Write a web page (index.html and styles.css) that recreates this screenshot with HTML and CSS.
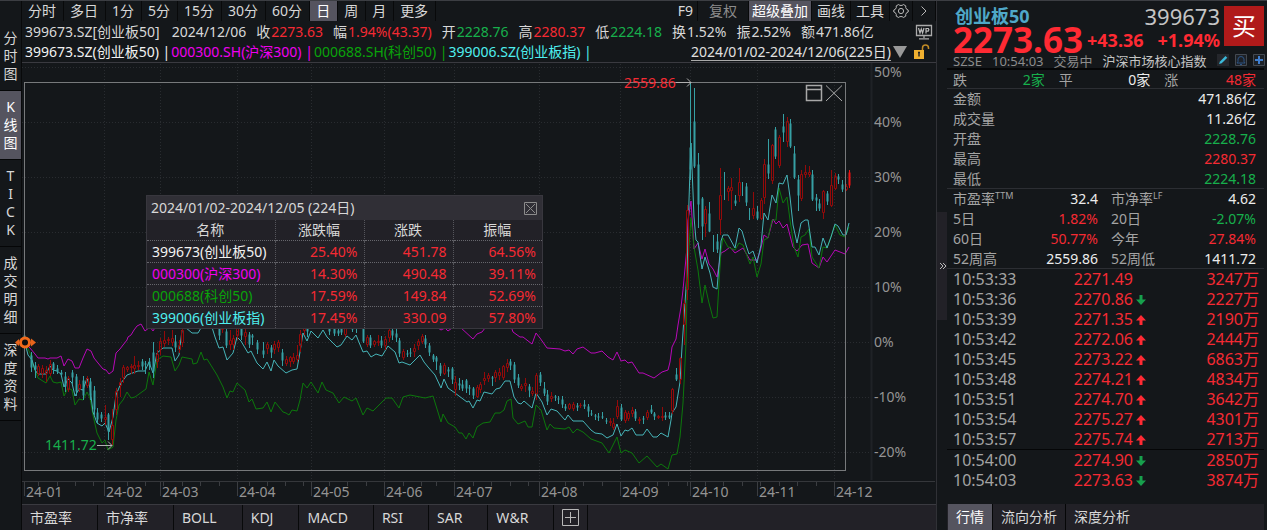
FILE: index.html
```html
<!DOCTYPE html>
<html lang="zh-CN">
<head>
<meta charset="utf-8">
<title>创业板50 399673</title>
<link rel="stylesheet" href="styles.css">
</head>
<body>
<div class="app">
  <nav class="side">
    <button class="side-tab">分<br>时<br>图</button>
    <button class="side-tab active">K<br>线<br>图</button>
    <button class="side-tab">T<br>I<br>C<br>K</button>
    <button class="side-tab">成<br>交<br>明<br>细</button>
    <button class="side-tab">深<br>度<br>资<br>料</button>
  </nav>

  <main class="main">
    <div class="toolbar">
      <div class="periods">
        <button>分时</button><button>多日</button><button>1分</button><button>5分</button><button>15分</button><button>30分</button><button>60分</button><button class="active">日</button><button>周</button><button>月</button><button>更多</button>
      </div>
      <div class="tools">
        <button class="tool-f9">F9</button><button class="tool-dim">复权</button><button class="tool-on active">超级叠加</button><button>画线</button><button>工具</button>
        <button class="tool-icon" aria-label="设置"><svg width="16" height="16" viewBox="0 0 16 16"><path d="M5.6 1.5 6.9 2.4H9.1L10.4 1.5 12.8 2.9 12.7 4.5 13.7 6.3 15.2 7V9L13.7 9.7 12.7 11.5 12.8 13.1 10.4 14.5 9.1 13.6H6.9L5.6 14.5 3.2 13.1 3.3 11.5 2.3 9.7.8 9V7L2.3 6.3 3.3 4.5 3.2 2.9Z"/><circle cx="8" cy="8" r="2.6"/></svg></button>
        <button class="tool-icon" aria-label="展开"><svg width="16" height="16" viewBox="0 0 16 16"><path d="M5.5 3.5 10 8 5.5 12.5"/></svg></button>
      </div>
    </div>

    <div class="quote">
      <span class="quote-name">399673.SZ[创业板50]</span>
      <span>2024/12/06</span>
      <span>收<b class="up">2273.63</b></span>
      <span>幅<b class="up">1.94%(43.37)</b></span>
      <span>开<b class="down">2228.76</b></span>
      <span>高<b class="up">2280.37</b></span>
      <span>低<b class="down">2224.18</b></span>
      <span>换<b>1.52%</b></span>
      <span>振<b>2.52%</b></span>
      <span>额<b>471.86亿</b></span>
      <svg class="quote-icon" width="18" height="16" viewBox="0 0 18 16"><path d="M1.5 1.5H16.5V11.5H1.5ZM9 11.5V14M4 14.8H14" fill="none" stroke="#aaa" stroke-width="1.3"/><path d="M3.5 4 5 9 6.3 5 7.6 9 9 4M11 9.5V4.5H13.3Q14.5 5.8 13.3 7.2H11" fill="none" stroke="#bbb" stroke-width="1.2"/></svg>
    </div>

    <div class="legend">
      <span class="s-white">399673.SZ(创业板50) |</span>
      <span class="s-magenta">000300.SH(沪深300) |</span>
      <span class="s-green">000688.SH(科创50) |</span>
      <span class="s-cyan">399006.SZ(创业板指) |</span>
      <a class="range" href="#">2024/01/02-2024/12/06(225日)</a>
      <svg class="range-arrow" width="16" height="14" viewBox="0 0 16 14"><path d="M1 1H15L8 13Z" fill="#999"/></svg>
      <svg class="lock" width="18" height="16" viewBox="0 0 18 16"><path d="M1 6H11V15H1Z" fill="#f0b030"/><path d="M5 8.5H7M6 8.5V12.5" stroke="#222" stroke-width="1.4"/><path d="M9.5 6V4Q9.500 1 12.500 1 15.500 1 15.500 4V5" fill="none" stroke="#c08a25" stroke-width="1.5"/></svg>
    </div>

    <section class="chart">
      <svg class="plot" viewBox="22 63 914 440">
        <g class="grid">
          <path d="M22 67.500H871M22 122.500H871M22 177.500H871M22 232.500H871M22 287.500H871M22 342.500H871M22 397.500H871M22 452.500H871"/>
          <path d="M104.500 64V480M160.500 64V480M237.500 64V480M311.500 64V480M384.500 64V480M454.500 64V480M539.500 64V480M620.500 64V480M690.500 64V480M757.500 64V480M834.500 64V480"/>
        </g>
        <path class="axis-rule" d="M871.500 63V480"/>
        <path class="axis-line" d="M22 481.500H935"/>
        <path class="axis-tick" d="M24.500 482V496M104.500 482V496M160.500 482V496M237.500 482V496M311.500 482V496M384.500 482V496M454.500 482V496M539.500 482V496M620.500 482V496M690.500 482V496M757.500 482V496M834.500 482V496M38.500 482V486M57.500 482V486M75.500 482V486M93.500 482V486M127.500 482V486M145.500 482V486M163.500 482V486M182.500 482V486M200.500 482V486M219.500 482V486M249.500 482V486M267.500 482V486M285.500 482V486M303.500 482V486M329.500 482V486M347.500 482V486M366.500 482V486M403.500 482V486M421.500 482V486M436.500 482V486M473.500 482V486M491.500 482V486M510.500 482V486M528.500 482V486M547.500 482V486M565.500 482V486M583.500 482V486M602.500 482V486M639.500 482V486M657.500 482V486M668.500 482V486M687.500 482V486M705.500 482V486M723.500 482V486M742.500 482V486M760.500 482V486M779.500 482V486M797.500 482V486M816.500 482V486"/>
        <g class="axis-text">
          <text x="874" y="77">50%</text><text x="874" y="127">40%</text><text x="874" y="182">30%</text><text x="874" y="237">20%</text><text x="874" y="292">10%</text><text x="874" y="347">0%</text><text x="874" y="402">-10%</text><text x="874" y="457">-20%</text>
          <text x="26" y="497">24-01</text><text x="106" y="497">24-02</text><text x="162" y="497">24-03</text><text x="239" y="497">24-04</text><text x="313" y="497">24-05</text><text x="386" y="497">24-06</text><text x="456" y="497">24-07</text><text x="541" y="497">24-08</text><text x="622" y="497">24-09</text><text x="692" y="497">24-10</text><text x="759" y="497">24-11</text><text x="836" y="497">24-12</text>
        </g>
        <g class="lines">
          <polyline class="l-magenta" points="25,343 30,348 35,354 38,358 45,358 48,359 50,358 57,358 61,356 64,366 68,359 72,361 75,368 79,368 83,358 87,349 91,351 94,358 98,363 103,369 106,370 109,374 113,371 116,353 120,349 123,345 127,340 128,337 131,335 134,330 137,326 141,324 145,331 150,327 153,331 156,326 170,310 300,300 420,310 438,328 441,330 445,328 448,331 452,328 460,327 473,339 477,334 482,332 485,328 498,318 511,326 513,332 520,337 523,337 532,344 536,333 540,338 547,348 560,349 565,351 569,350 573,354 577,349 583,347 591,353 595,353 602,351 608,357 613,360 617,352 621,361 625,360 628,363 632,362 639,373 643,373 654,378 658,375 662,372 668,370 670,362 672,347 676,339 678,325 681,307 683,290 687,247 688,220 691,201 694,249 698,243 702,259 705,249 709,264 713,269 717,277 721,253 725,251 730,247 735,253 743,248 750,260 757,260 760,252 764,235 768,238 773,219 776,224 779,221 783,228 787,224 793,247 797,251 802,245 808,244 812,263 819,268 823,257 827,262 835,250 845,254 849,247"/>
          <polyline class="l-green" points="25,343 30,353 33,365 38,378 46,383 50,376 53,382 57,383 61,382 64,396 68,388 72,390 75,405 79,399 83,400 87,392 90,398 93,415 97,433 102,443 105,440 108,450 113,447 116,420 119,405 123,400 127,392 131,398 135,397 146,389 149,372 153,385 157,360 163,356 171,357 175,371 179,365 182,357 192,359 193,364 197,363 201,352 204,360 207,359 217,375 223,387 227,398 230,391 233,392 237,383 245,390 249,402 252,399 256,409 263,408 267,402 271,412 275,402 283,412 286,413 289,415 292,410 297,411 300,400 303,383 307,388 311,382 318,393 322,382 326,390 333,393 339,403 344,397 352,401 356,398 363,415 367,408 373,411 386,398 392,398 399,408 403,397 410,395 425,398 433,396 441,422 443,414 448,423 455,427 459,433 462,433 466,439 469,433 473,438 477,427 483,423 490,422 495,413 500,413 504,410 507,401 511,399 513,418 518,424 525,421 528,427 532,427 536,405 541,410 547,430 550,424 554,428 565,429 569,427 573,433 577,429 583,432 591,439 602,443 609,453 617,437 621,453 625,450 632,453 639,463 647,456 657,467 661,464 668,469 672,455 677,454 680,437 683,403 686,343 687,293 689,247 691,218 694,247 698,270 702,303 705,285 709,303 713,318 717,317 721,250 723,238 728,247 735,250 739,243 743,245 750,264 753,257 757,277 761,264 764,240 768,238 772,220 776,220 779,188 783,203 787,197 790,220 794,247 798,257 801,237 805,235 809,229 812,257 819,268 823,247 827,248 835,225 840,235 845,237 849,227"/>
          <polyline class="l-cyan" points="25,343 28,355 32,360 35,370 38,374 46,374 50,366 53,370 57,371 61,374 64,387 68,379 72,383 75,396 79,389 83,390 87,378 90,388 93,412 97,423 102,426 105,423 109,432 113,417 116,395 121,383 127,375 138,371 145,371 149,362 153,373 157,353 163,348 172,348 175,361 179,355 182,330 185,327 192,333 198,333 201,328 211,324 215,337 219,348 223,347 227,360 233,353 237,337 241,341 248,353 251,351 257,363 263,369 267,362 271,371 274,360 278,366 286,373 292,370 297,369 300,352 303,333 307,341 311,331 318,338 323,330 327,337 337,347 341,345 347,336 352,340 356,335 363,352 367,351 371,357 376,354 382,356 388,346 395,352 399,363 402,362 410,365 420,355 424,362 428,367 435,375 441,388 444,379 448,388 455,393 467,402 469,401 473,408 477,400 480,401 484,392 492,394 496,389 500,388 505,381 510,381 514,397 518,403 521,404 524,401 532,408 536,393 542,402 547,415 551,409 557,411 565,420 568,415 573,421 583,421 591,430 595,433 602,434 607,438 613,435 617,424 621,436 625,430 628,431 632,428 636,435 643,435 647,429 653,437 657,437 661,433 668,437 671,420 672,413 676,407 680,382 682,347 685,303 687,273 689,200 690,170 691,143 694,217 696,240 698,242 702,269 705,257 710,273 713,287 717,289 721,241 723,235 728,235 735,248 739,228 742,231 746,245 749,254 753,251 757,263 761,245 764,213 768,220 772,195 776,203 779,183 783,184 787,175 790,197 793,225 797,243 801,223 805,220 808,220 812,247 815,247 819,255 823,238 827,248 831,237 835,224 838,226 843,235 846,235 849,223"/>
        </g>
        <g id="candles"></g>
        <rect class="frame" x="24.500" y="82.500" width="821" height="388"/>
        <text class="hi-text" x="624" y="88">2559.86</text>
        <path class="pointer" d="M676 82.500H691M687 78.500 691 82.500 687 86.500"/>
        <text class="lo-text" x="45" y="450">1411.72</text>
        <path class="pointer" d="M97 445.500H112M108 441.500 112 445.500 108 449.500"/>
        <g class="frame-tools"><path d="M806.500 85.500H821.500V100.500H806.500ZM806.500 89.500H821.500" stroke-width="1.500"/><path d="M826 85.500 842 101M842 85.500 826 101"/></g>
        <path d="M15 342.500 19 339V346ZM36 342.500 31 338.500V346.500Z" fill="#e8641b"/>
        <circle cx="25" cy="342.500" r="4.500" fill="#101010" stroke="#f26a1b" stroke-width="3"/>
      </svg>

      <div class="popup">
        <div class="popup-head">
          <span>2024/01/02-2024/12/05 (224日)</span>
          <button aria-label="关闭"><svg width="13" height="13" viewBox="0 0 13 13"><path d="M.5.5H12.500V12.500H.5ZM2 2 11 11M11 2 2 11"/></svg></button>
        </div>
        <table>
          <colgroup><col class="c-name"><col class="c-num"><col class="c-num"><col class="c-num"></colgroup>
          <thead><tr><th>名称</th><th>涨跌幅</th><th>涨跌</th><th>振幅</th></tr></thead>
          <tbody>
            <tr><td class="s-white">399673(创业板50)</td><td>25.40%</td><td>451.78</td><td>64.56%</td></tr>
            <tr><td class="s-magenta">000300(沪深300)</td><td>14.30%</td><td>490.48</td><td>39.11%</td></tr>
            <tr><td class="s-green">000688(科创50)</td><td>17.59%</td><td>149.84</td><td>52.69%</td></tr>
            <tr><td class="s-cyan">399006(创业板指)</td><td>17.45%</td><td>330.09</td><td>57.80%</td></tr>
          </tbody>
        </table>
      </div>
    </section>

    <div class="indicators">
      <button>市盈率</button><button>市净率</button><button>BOLL</button><button>KDJ</button><button>MACD</button><button>RSI</button><button>SAR</button><button>W&amp;R</button>
      <button class="add" aria-label="添加"><svg width="17" height="17" viewBox="0 0 17 17"><path d="M.5.5H16.500V16.500H.5ZM8.500 3V14M3 8.500H14"/></svg></button>
    </div>
  </main>

  <button class="collapse" aria-label="收起"><svg width="8" height="8" viewBox="0 0 8 8"><path d="M1 1 4 4 1 7M4 1 7 4 4 7"/></svg></button>

  <aside class="panel">
    <header class="head">
      <div class="head-left">
        <h1>创业板50</h1>
        <strong class="price">2273.63</strong>
      </div>
      <div class="head-mid">
        <span class="code">399673</span>
        <span class="change"><span>+43.36</span><span>+1.94%</span></span>
      </div>
      <button class="buy">买</button>
    </header>
    <div class="status">
      <span>SZSE</span><span>10:54:03</span><span>交易中</span><span class="status-tag">沪深市场核心指数</span>
      <span class="status-icons">
        <svg width="12" height="12" viewBox="0 0 12 12"><path d="M0 0H12V12H0Z" fill="#25272c"/><path d="M2 10 3 7.500 8.500 2 10.300 3.800 4.700 9.300Z" fill="#3bb8d8"/></svg>
        <svg width="12" height="12" viewBox="0 0 12 12"><path d="M.5.5H11.500V11.500H.5Z" fill="#1d2127" stroke="#444a52"/><path d="M2 9H10L9 7.500V5Q8.500 2.500 6 2.500 3.500 2.500 3 5V7.500ZM5 10.500H7" fill="none" stroke="#2d5585"/></svg>
        <svg width="12" height="12" viewBox="0 0 12 12"><path d="M.5.5H11.500V11.500H.5Z" fill="#1d2127" stroke="#444a52"/><path d="M6 2V10M2 6H10" stroke="#3f7fd0" stroke-width="2"/></svg>
      </span>
    </div>

    <dl class="breadth">
      <div><dt>跌</dt><dd class="down">2家</dd></div>
      <div><dt>平</dt><dd>0家</dd></div>
      <div><dt>涨</dt><dd class="up">48家</dd></div>
    </dl>
    <dl class="stats">
      <div><dt>金额</dt><dd>471.86亿</dd></div>
      <div><dt>成交量</dt><dd>11.26亿</dd></div>
      <div><dt>开盘</dt><dd class="down">2228.76</dd></div>
      <div><dt>最高</dt><dd class="up">2280.37</dd></div>
      <div><dt>最低</dt><dd class="down">2224.18</dd></div>
    </dl>
    <dl class="stats pairs">
      <div><dt>市盈率<sup>TTM</sup></dt><dd>32.4</dd></div>
      <div><dt>市净率<sup>LF</sup></dt><dd>4.62</dd></div>
      <div><dt>5日</dt><dd class="up">1.82%</dd></div>
      <div><dt>20日</dt><dd class="down">-2.07%</dd></div>
      <div><dt>60日</dt><dd class="up">50.77%</dd></div>
      <div><dt>今年</dt><dd class="up">27.84%</dd></div>
      <div><dt>52周高</dt><dd>2559.86</dd></div>
      <div><dt>52周低</dt><dd>1411.72</dd></div>
    </dl>

    <table class="ticks">
      <colgroup><col class="t-time"><col class="t-price"><col class="t-dir"><col></colgroup>
      <tbody>
        <tr><th>10:53:33</th><td>2271.49</td><td></td><td>3247万</td></tr>
        <tr><th>10:53:36</th><td>2270.86</td><td><svg class="arrow fall" viewBox="0 0 10 10"><path d="M3.500 0H6.500V4.500H10L5 10 0 4.500H3.500Z"/></svg></td><td>2227万</td></tr>
        <tr><th>10:53:39</th><td>2271.35</td><td><svg class="arrow rise" viewBox="0 0 10 10"><path d="M3.500 10H6.500V5.500H10L5 0 0 5.500H3.500Z"/></svg></td><td>2190万</td></tr>
        <tr><th>10:53:42</th><td>2272.06</td><td><svg class="arrow rise" viewBox="0 0 10 10"><path d="M3.500 10H6.500V5.500H10L5 0 0 5.500H3.500Z"/></svg></td><td>2444万</td></tr>
        <tr><th>10:53:45</th><td>2273.22</td><td><svg class="arrow rise" viewBox="0 0 10 10"><path d="M3.500 10H6.500V5.500H10L5 0 0 5.500H3.500Z"/></svg></td><td>6863万</td></tr>
        <tr><th>10:53:48</th><td>2274.21</td><td><svg class="arrow rise" viewBox="0 0 10 10"><path d="M3.500 10H6.500V5.500H10L5 0 0 5.500H3.500Z"/></svg></td><td>4834万</td></tr>
        <tr><th>10:53:51</th><td>2274.70</td><td><svg class="arrow rise" viewBox="0 0 10 10"><path d="M3.500 10H6.500V5.500H10L5 0 0 5.500H3.500Z"/></svg></td><td>3642万</td></tr>
        <tr><th>10:53:54</th><td>2275.27</td><td><svg class="arrow rise" viewBox="0 0 10 10"><path d="M3.500 10H6.500V5.500H10L5 0 0 5.500H3.500Z"/></svg></td><td>4301万</td></tr>
        <tr class="minute-end"><th>10:53:57</th><td>2275.74</td><td><svg class="arrow rise" viewBox="0 0 10 10"><path d="M3.500 10H6.500V5.500H10L5 0 0 5.500H3.500Z"/></svg></td><td>2713万</td></tr>
        <tr><th>10:54:00</th><td>2274.90</td><td><svg class="arrow fall" viewBox="0 0 10 10"><path d="M3.500 0H6.500V4.500H10L5 10 0 4.500H3.500Z"/></svg></td><td>2850万</td></tr>
        <tr><th>10:54:03</th><td>2273.63</td><td><svg class="arrow fall" viewBox="0 0 10 10"><path d="M3.500 0H6.500V4.500H10L5 10 0 4.500H3.500Z"/></svg></td><td>3874万</td></tr>
      </tbody>
    </table>

    <div class="panel-tabs">
      <button class="active">行情</button><button>流向分析</button><button>深度分析</button>
    </div>
  </aside>
</div>
<script src="chart.js"></script>
</body>
</html>
```

FILE: styles.css
```css
* { box-sizing: border-box; }

body {
  margin: 0;
  background: #14171a;
  color: #d8d8d8;
  font: 14px/20px "Noto Sans", "Noto Sans CJK SC", sans-serif;
}

button {
  margin: 0;
  padding: 0;
  border: 0;
  background: none;
  color: inherit;
  font: inherit;
  white-space: nowrap;
}

button svg { display: block; fill: none; stroke: #b8b8b8; }
b { font-weight: 400; }
.up { color: #f52a33; }
.down { color: #17b04c; }
.s-white { color: #f2f2f2; }
.s-magenta { color: #f000f0; }
.s-green { color: #0aa30a; }
.s-cyan { color: #4fefef; }
.active { background: #55545f; color: #fff; }

.app {
  display: grid;
  grid-template-columns: 22px minmax(0, 1fr) 11px 320px;
  min-height: 100vh;
  border-top: 1px solid #3c3e43;
}

/* left view switcher */
.side {
  padding-top: 21px;
  border-right: 1px solid #08090a;
}
.side-tab {
  display: block;
  width: 100%;
  padding: 7px 0;
  border-bottom: 1px solid #050607;
  line-height: 18px;
}

/* chart column */
.main { display: flex; flex-direction: column; }
.toolbar { display: flex; justify-content: space-between; height: 20px; }
.periods, .tools { display: flex; }
.periods button {
  padding: 0 7px 0 6px;
  border-right: 1px solid #08090a;
}
.periods button, .tools button { height: 20px; }
.tools button { padding: 0 5px; border-right: 1px solid #08090a; }
.tools .tool-f9 { padding: 0 4px; }
.tools .tool-dim { padding: 0 11px; color: #8c8c8c; }
.tools .tool-on { padding: 0 3px; }
.tools .tool-icon { padding: 0 3px; }

.quote, .legend { display: flex; align-items: center; padding: 0 3px; white-space: nowrap; }
.quote { height: 21px; gap: 10px; }
.quote b { margin-left: 1px; }
.quote-name { margin-right: 2px; }
.quote-icon { margin-left: auto; }
.legend { height: 21px; gap: 1px; border-bottom: 1px solid #3a3a40; }
.range {
  margin-left: auto;
  color: #e0e0e0;
  line-height: 17px;
  text-decoration: none;
  border-bottom: 1px solid #aaa;
}
.lock { margin: 0 2px 0 4px; }

.chart { position: relative; flex: 1; }
.plot { display: block; width: 100%; overflow: visible; }
.grid path { stroke: #292c30; stroke-dasharray: 1 2; }
.axis-rule { stroke: #1f2226; stroke-width: 2; }
.axis-line { stroke: #35373b; stroke-width: 1; }
.axis-tick { stroke: #3b3d41; fill: none; }
.axis-text { fill: #949494; font-size: 14px; }
.lines polyline { fill: none; stroke-width: 1; }
.l-magenta { stroke: #b808b8; }
.l-green { stroke: #0c780c; }
.l-cyan { stroke: #46b4b8; }
.frame { fill: none; stroke: #77797b; }
.pointer { fill: none; stroke: #b0b0b0; }
.frame-tools { fill: none; stroke: #a8a8a8; }
.hi-text { fill: #f52a33; }
.lo-text { fill: #17b04c; }
.candle-up path { fill: none; stroke: #940a0a; }
.candle-last path { fill: #f01010; stroke: #f01010; }
.candle-down path { fill: #36a0a4; stroke: #36a0a4; }

/* range statistics window */
.popup {
  position: absolute;
  top: 132px;
  left: 124px;
  width: 397px;
  border: 1px solid #38373e;
  background: #222127;
}
.popup-head {
  display: flex;
  align-items: center;
  justify-content: space-between;
  height: 24px;
  padding: 0 5px 0 4px;
  background: #302f36;
}
.popup-head svg { stroke: #8c8c8c; }
.popup table { width: 100%; table-layout: fixed; border-collapse: collapse; }
.c-name { width: 128px; }
.popup th, .popup td { height: 20px; padding: 0 6px 0 5px; font-weight: 400; line-height: 19px; }
.popup td { height: 22px; line-height: 21px; }
.popup td:not(:first-child) { color: #f52a33; text-align: right; }
.popup tr > * + * { border-left: 1px dotted #55555b; }
.popup tbody tr > * { border-top: 1px dotted #66666c; }

.indicators {
  display: flex;
  height: 26px;
  background: #222127;
  border-top: 1px solid #3a3a40;
}
.indicators button { padding: 0 25px 0 8px; border-right: 1px solid #08090a; }
.indicators .add { padding: 0 8px; }

/* divider with collapse handle */
.collapse {
  display: flex;
  align-items: center;
  align-self: stretch;
  padding-left: 2px;
  border-left: 1px solid #303136;
  background: linear-gradient(#222127, #222127) 0 50% / 11px 108px no-repeat;
}

/* right quote panel */
.panel {
  display: flex;
  flex-direction: column;
  min-width: 0;
  padding-right: 3px;
}
.head { display: flex; padding: 5px 0 0 6px; height: 50px; }
.head-left { width: 134px; }
.head h1 {
  margin: 0;
  padding-left: 2px;
  color: #4fa8c8;
  font-size: 18px;
  line-height: 20px;
}
.price { display: block; color: #ff2a33; font-size: 35px; line-height: 28px; }
.head-mid { display: flex; flex: 1; flex-direction: column; padding-right: 4px; text-align: right; }
.code { font-size: 22px; line-height: 20px; color: #c4c4c4; }
.change {
  display: flex;
  justify-content: space-between;
  color: #ff2a33;
  font-size: 18px;
  font-weight: 700;
  line-height: 28px;
}
.buy {
  width: 40px;
  height: 40px;
  background: #b01a1a;
  color: #fff;
  font-size: 24px;
}
.status {
  display: flex;
  gap: 10px;
  height: 19px;
  padding-left: 6px;
  border-bottom: 2px solid #050607;
  color: #8c8c8c;
  font-size: 13px;
  white-space: nowrap;
}
.status-tag { color: #c4c4c4; }
.status-icons { display: flex; gap: 6px; align-items: center; margin-left: auto; }

dl, dd { margin: 0; }
dt { color: #a4a4a4; }
dd { color: #ececec; }
dd.up { color: #f52a33; }
dd.down { color: #17b04c; }
.breadth, .stats { padding: 0 8px 0 6px; border-bottom: 1px solid #2c2e33; }
.breadth div, .stats div { display: flex; justify-content: space-between; height: 20px; }
.breadth { display: grid; grid-template-columns: repeat(3, 1fr); column-gap: 14px; height: 19px; }
.stats { height: 100px; }
.pairs { display: grid; grid-template-columns: 1fr 1fr; column-gap: 13px; height: 80px; }
sup { font-size: 9px; line-height: 9px; vertical-align: 5px; }

.ticks {
  width: 100%;
  table-layout: fixed;
  border-collapse: collapse;
  font-size: 16px;
}
.t-time { width: 126px; }
.t-price { width: 60px; }
.t-dir { width: 13px; }
.ticks th, .ticks td { height: 20px; padding: 0; line-height: 20px; }
.ticks th { padding-left: 6px; color: #a4a4a4; font-weight: 400; text-align: left; }
.ticks td { color: #f52a33; text-align: right; }
.ticks td:last-child { padding-right: 5px; }
.minute-end > * { border-bottom: 1px solid #050607; }
.arrow { width: 10px; height: 10px; }
.rise { fill: #ff2a33; }
.fall { fill: #17a04c; }

.panel-tabs { display: flex; height: 26px; margin-top: auto; padding-left: 1px; background: #222127; }
.panel-tabs button { padding: 0 8px; border-right: 1px solid #050607; }
.panel-tabs button:last-child { border-right: 0; }
```

FILE: chart.js
```js
// Daily bars: direction (r = rise, c = fall), x, high, low, body top, body bottom
const bars = `
c 24 330 345 335 345;c 31 352 372 355 368;c 35 362 378 365 370;r 38 364 376 366 374;r 42 365 378 368 374;
r 46 366 382 370 374;r 50 360 376 364 374;c 53 362 374 363 370;c 57 365 374 368 372;c 61 370 376 372 375;
c 65 372 392 376 387;r 68 376 392 378 390;c 72 370 384 372 378;c 76 374 396 376 392;r 79 380 392 384 390;
c 83 376 400 380 396;r 87 376 388 378 386;c 90 378 400 381 396;c 94 386 415 390 410;c 97 408 424 412 420;
c 101 412 422 414 419;r 105 405 425 417 420;c 108 413 440 414 432;r 112 409 445 425 440;r 116 388 415 391 410;
r 120 378 397 382 386;r 123 365 383 367 378;r 127 366 372 367 370;r 131 364 374 366 368;r 134 356 374 365 369;
r 138 361 370 365 367;c 142 359 370 361 367;c 145 361 374 363 365;c 149 358 370 361 366;c 153 342 378 352 372;
r 157 350 368 354 362;r 160 338 355 341 350;r 164 331 347 340 344;r 168 337 345 339 341;r 172 330 346 338 343;
c 175 335 352 341 348;r 179 340 353 345 350;r 182 325 347 330 343;c 219 325 340 327 336;r 222 325 333 326 330;
c 226 328 348 331 346;r 230 330 350 340 345;r 233 335 350 338 345;r 237 322 340 325 336;c 241 322 340 327 336;
r 245 328 345 332 337;c 249 332 348 334 345;c 252 334 345 335 338;c 257 340 354 342 350;c 263 342 358 350 355;
r 267 342 354 344 349;c 271 345 358 347 353;r 274 341 354 344 350;r 278 340 352 342 348;c 282 349 366 352 361;
r 286 356 366 359 364;r 290 356 367 357 362;r 293 353 364 357 362;r 297 345 362 355 360;r 300 330 352 334 346;
r 304 325 335 326 331;c 307 325 337 326 332;c 329 325 335 327 332;c 334 327 336 328 334;c 338 327 336 330 334;
c 341 327 335 328 333;r 345 326 337 328 335;c 352 324 332 325 330;c 356 324 333 326 329;c 363 325 343 328 342;
r 367 335 347 337 345;c 370 335 348 337 346;r 374 340 347 341 345;r 378 335 346 341 343;c 381 336 348 340 346;
r 385 336 350 339 346;r 389 328 342 330 338;c 392 326 340 330 336;c 396 329 342 333 338;c 399 338 357 340 354;
r 403 349 360 351 358;c 407 350 357 353 355;c 410 348 357 352 354;r 414 344 357 348 352;r 418 339 350 341 346;
r 422 334 344 336 342;c 425 335 348 338 345;c 429 343 356 345 353;c 433 354 362 355 360;c 436 356 370 357 362;
c 440 363 376 365 374;r 444 363 375 365 374;c 448 367 377 369 372;c 452 367 384 368 380;r 455 376 396 382 390;
c 459 378 390 383 386;c 462 380 391 384 389;c 466 379 393 380 389;c 469 385 395 387 389;c 473 387 399 388 396;
r 477 385 398 387 397;r 480 382 393 384 390;r 484 372 385 378 381;r 488 373 382 375 379;c 492 376 386 377 379;
r 495 370 382 372 378;r 499 368 380 372 376;r 503 365 380 366 378;r 507 359 372 363 368;c 510 359 370 361 366;
c 514 362 383 364 380;c 518 374 388 377 386;r 521 384 391 386 389;r 525 378 392 383 386;c 529 384 397 386 391;
r 532 387 396 391 394;r 536 373 400 375 394;c 540 372 386 374 383;c 544 382 396 388 394;c 547 390 405 394 402;
r 551 392 402 396 399;c 555 395 401 396 398;c 558 396 404 398 400;c 562 396 408 399 405;c 565 404 411 406 409;
r 569 403 410 404 409;r 573 402 411 404 409;c 577 403 411 405 408;r 580 403 408 405 406;c 584 400 409 404 407;
c 588 404 417 406 412;c 591 410 416 413 415;c 595 414 420 415 417;c 598 413 421 416 418;c 602 412 419 416 418;
c 606 418 424 420 422;r 610 418 426 421 423;r 613 418 430 423 428;r 617 400 419 406 417;c 621 404 421 407 420;
r 625 410 423 412 421;r 628 411 421 413 419;r 632 407 417 410 414;c 635 409 421 411 419;r 639 417 424 419 421;
c 643 416 424 418 420;r 647 410 420 412 418;c 651 405 414 409 413;c 654 412 420 413 417;r 658 415 419 416 418;
r 662 407 421 416 418;c 665 412 420 415 418;c 669 412 419 415 418;r 672 388 414 389 411;c 676 368 381 374 380;
r 680 357 384 358 380;r 684 300 345 303 325;r 687 205 300 210 290;c 690 82 180 147 170;c 694 88 168 121 167;
c 698 153 228 164 205;c 702 197 240 198 227;r 705 206 237 209 224;c 709 202 232 213 232;c 713 235 252 248 249;
c 717 234 253 241 250;r 720 168 235 195 220;c 724 172 200 189 190;r 728 186 201 188 192;r 731 178 210 187 191;
c 735 195 206 200 204;r 739 168 202 182 196;c 742 182 196 186 187;c 746 183 206 186 203;c 749 208 220 211 212;
r 753 192 219 208 216;c 757 206 220 211 219;r 761 198 220 200 219;r 764 159 204 164 198;c 768 139 179 164 174;
r 772 144 184 145 181;c 775 127 159 129 157;r 779 135 168 137 166;c 783 114 142 126 133;r 787 117 147 121 142;
c 790 119 148 123 147;c 794 146 179 153 178;c 798 175 211 179 196;r 801 170 201 174 199;r 805 165 178 172 175;
r 809 166 177 172 175;c 812 170 201 174 200;c 816 194 211 197 201;c 819 199 211 203 209;r 823 190 219 191 213;
c 827 191 205 193 202;r 831 170 207 185 206;r 835 173 190 176 189;c 838 174 184 176 180;c 842 180 192 184 190;
r 846 184 191 186 190;l 849 170 188 172 186`;

const classes = { r: 'candle-up', c: 'candle-down', l: 'candle-last' };

document.getElementById('candles').innerHTML = bars.trim().split(';').map((row) => {
  const [kind, ...values] = row.trim().split(' ');
  const [x, high, low, top, bottom] = values.map(Number);
  const half = kind === 'r' ? 1 : 0.5;
  const mid = x + 0.5;
  return `<g class="${classes[kind]}"><path d="M${mid} ${high}V${top}M${mid} ${bottom}V${low}` +
    `M${mid - half} ${top + 0.5}H${mid + half}V${bottom - 0.5}H${mid - half}Z"/></g>`;
}).join('');
```
